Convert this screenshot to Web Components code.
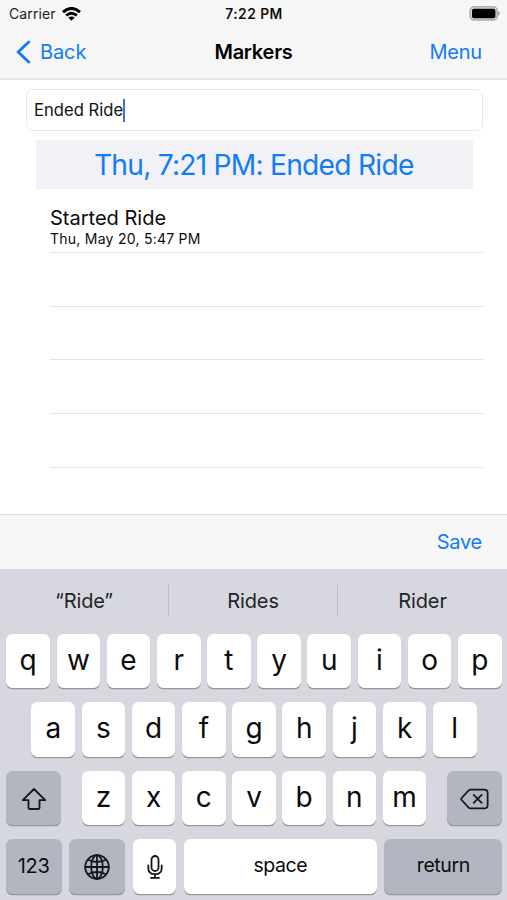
<!DOCTYPE html>
<html lang="en">
<head>
<meta charset="utf-8">
<title>Markers</title>
<style>
html,body{margin:0;padding:0}
body{width:507px;height:900px;overflow:hidden;background:#fff;font-family:Inter,"Liberation Sans",sans-serif;color:#0b0b0d}
</style>
</head>
<body>
<marker-screen></marker-screen>
<script>
const define = (name, html) => {
  const template = document.createElement('template');
  template.innerHTML = html;
  customElements.define(name, class extends HTMLElement {
    constructor() {
      super();
      this.attachShadow({ mode: 'open' }).append(template.content.cloneNode(true));
    }
  });
};

define('status-bar', `
<style>
:host{display:grid;grid-template-columns:1fr auto 1fr;align-items:center;height:27px;padding:0 7px;font-size:14px;box-sizing:border-box}
.left{display:flex;align-items:center;gap:6px;letter-spacing:.12px;color:#222;padding-left:2px}
.time{font-weight:600;font-size:13.8px;letter-spacing:.5px;color:#111;padding-left:1px}
.right{justify-self:end;display:flex}
svg{display:block}
</style>
<div class="left"><span>Carrier</span>
<svg width="19" height="14" viewBox="0 0 19 14" fill="none" stroke="#000" stroke-width="2.9"><path d="M1 5.1Q9.5-2.3 18 5.1M4.1 8.5Q9.5 4 14.9 8.5"/><path d="M6.3 10.6Q9.5 8.2 12.7 10.6L9.5 13.7Z" fill="#000" stroke="none"/></svg></div>
<div class="time">7:22 PM</div>
<div class="right"><svg width="31" height="15" viewBox="0 0 31 15"><rect x="1.2" y=".8" width="27" height="13.2" rx="4" fill="#d8d8d8" stroke="#adadad" stroke-width="1.6"/><rect x="3" y="2.8" width="23.4" height="9.4" rx="1.8" fill="#000"/><path d="M29 5q2 1 2 2.4T29 9.8z" fill="#adadad"/></svg></div>`);

define('nav-bar', `
<style>
:host{display:grid;grid-template-columns:1fr auto 1fr;align-items:center;height:50px;padding:0 16px;font-size:20px;box-sizing:border-box}
.back{display:flex;align-items:center;gap:9px;color:#117cf6;letter-spacing:-.1px}
.title{font-weight:600;color:#000;letter-spacing:-.25px}
.menu{justify-self:end;color:#117cf6;letter-spacing:-.2px;padding-right:9px}
</style>
<div class="back"><svg width="15" height="24" viewBox="0 0 15 24" fill="none" stroke="#117cf6" stroke-width="2.9" stroke-linecap="round" stroke-linejoin="round"><path d="M12.7 2 2.2 12l10.5 10"/></svg><slot name="back"></slot></div>
<div class="title"><slot></slot></div>
<div class="menu"><slot name="action"></slot></div>`);

define('text-field', `
<style>
:host{display:flex;align-items:center;height:42px;box-sizing:border-box;border:1px solid #e9e9e9;border-radius:7px;background:#fff;padding-left:7.5px;font-size:16.6px;letter-spacing:.02px;color:#111}
i{width:2px;height:23px;background:#4a6be0;margin-left:-.5px}
</style>
<slot></slot><i></i>`);

define('marker-banner', `
<style>
:host{display:flex;align-items:center;justify-content:center;height:49px;background:#f1f1f6;color:#117cf6;font-size:28.2px;letter-spacing:-.76px;white-space:nowrap;box-sizing:border-box;padding-right:1px}
</style><slot></slot>`);

define('marker-row', `
<style>
:host{display:flex;flex-direction:column;justify-content:flex-end;height:53.8px;box-sizing:border-box;border-bottom:1px solid #e4e4e6;padding-bottom:5px}
.t{font-size:20px;line-height:24px}
.d{font-size:14px;line-height:17px;letter-spacing:.25px}
</style>
<div class="t"><slot name="title"></slot></div><div class="d"><slot name="date"></slot></div>`);

define('tool-bar', `
<style>
:host{display:flex;align-items:center;justify-content:flex-end;height:55px;box-sizing:border-box;background:#f6f6f7;border-top:1.5px solid #dfdfe0;padding-right:25px;color:#117cf6;font-size:20px;letter-spacing:-.25px}
</style><slot></slot>`);

define('word-suggestions', `
<style>
:host{display:grid;grid-template-columns:repeat(3,1fr);align-items:center;height:64.5px;font-size:20px;letter-spacing:-.1px;color:#222329}
::slotted(*){height:32px;line-height:32px;text-align:center;box-sizing:border-box}
::slotted(:not(:last-child)){border-right:1px solid #bbbcc2}
</style><slot></slot>`);

define('key-cap', `
<style>
:host{display:flex;align-items:center;justify-content:center;flex:none;width:43.6px;height:54.5px;box-sizing:border-box;background:#fff;border-radius:6.5px;box-shadow:0 1.3px 0 #96979d;font-size:28px;color:#0b0b0d;padding-bottom:2.4px}
:host([dark]){background:#b2b6c1}
:host([dark]),:host([word]){font-size:19.5px;letter-spacing:-.4px}
:host([wide]){width:55px}
:host([dark][mode]){width:56px;padding-bottom:0;font-size:20px;letter-spacing:-.2px}
:host([icon]){padding-bottom:0}
:host([space]){width:193.5px}
:host([enter]){width:118px}
</style><slot></slot>`);

define('key-row', `
<style>
:host{display:flex;justify-content:center;gap:6.6px;height:54.5px}
:host([spread]){justify-content:space-between}
:host([bottom]){gap:7.2px}
</style><slot></slot>`);

define('key-group', `<style>:host{display:flex;gap:6.6px}</style><slot></slot>`);

const caps = s => [...s].map(c => `<key-cap>${c}</key-cap>`).join('');

define('soft-keyboard', `
<style>
:host{display:block;height:331px;background:#d7d8df}
.rows{display:flex;flex-direction:column;gap:14px;padding:0 5px 0 6px}
.globe{margin-right:.8px}
svg{display:block;fill:none;stroke:#15161b;stroke-width:1.8;stroke-linejoin:round;stroke-linecap:round}
svg.low{padding-top:2px}
</style>
<word-suggestions><span>“Ride”</span><span>Rides</span><span>Rider</span></word-suggestions>
<div class="rows">
<key-row>${caps('qwertyuiop')}</key-row>
<key-row>${caps('asdfghjkl')}</key-row>
<key-row spread>
<key-cap dark wide icon><svg class="low" width="26" height="24" viewBox="0 0 26 24"><path d="M13 2 1.8 13.2h5.7v7.2q0 1.6 1.6 1.6h7.8q1.6 0 1.6-1.6v-7.2h5.7z"/></svg></key-cap>
<key-group>${caps('zxcvbnm')}</key-group>
<key-cap dark wide icon><svg class="low" width="29" height="22" viewBox="0 0 30 22"><path d="M11 1.2h14q3.6 0 3.6 3.6v12.4q0 3.6-3.6 3.6H11q-1.2 0-2-.8L1.7 12q-1-1 0-2L9 2q.8-.8 2-.8zM14.2 6.8l8.2 8.2M22.4 6.8 14.2 15"/></svg></key-cap>
</key-row>
<key-row bottom>
<key-cap dark mode>123</key-cap>
<key-cap dark mode icon class="globe"><svg class="low" width="26" height="26" viewBox="0 0 26 26"><circle cx="13" cy="13" r="11.8"/><ellipse cx="13" cy="13" rx="5.8" ry="11.8"/><path d="M13 1.2v23.6M1.2 13h23.6M4 5.8q9 4.4 18 0M4 20.2q9-4.4 18 0"/></svg></key-cap>
<key-cap icon><svg class="low" width="16" height="24" viewBox="0 0 16 24"><rect x="4.5" y="1" width="7" height="15" rx="3.5"/><path d="M1.3 10.5v2.7q0 6 6.7 6t6.7-6v-2.7M8 19.2v3.7M4 22.9h8"/></svg></key-cap>
<key-cap word space>space</key-cap>
<key-cap dark enter>return</key-cap>
</key-row>
</div>`);

define('marker-screen', `
<style>
:host{display:flex;flex-direction:column;width:507px;height:900px}
header{background:#f6f6f6;height:80px;box-sizing:border-box;border-bottom:2px solid #e5e5e5;flex:none}
main{flex:1;display:flex;flex-direction:column;padding:9px 24.5px 0 25.5px}
marker-banner{margin:9px 9.5px 0 10px}
.list{padding:10px 0 0 24.5px}
</style>
<header><status-bar></status-bar>
<nav-bar><span slot="back">Back</span>Markers<span slot="action">Menu</span></nav-bar></header>
<main>
<text-field>Ended Ride</text-field>
<marker-banner>Thu, 7:21 PM: Ended Ride</marker-banner>
<div class="list">
<marker-row><span slot="title">Started Ride</span><span slot="date">Thu, May 20, 5:47 PM</span></marker-row>
<marker-row></marker-row><marker-row></marker-row><marker-row></marker-row><marker-row></marker-row>
</div>
</main>
<tool-bar>Save</tool-bar>
<soft-keyboard></soft-keyboard>`);
</script>
</body>
</html>
